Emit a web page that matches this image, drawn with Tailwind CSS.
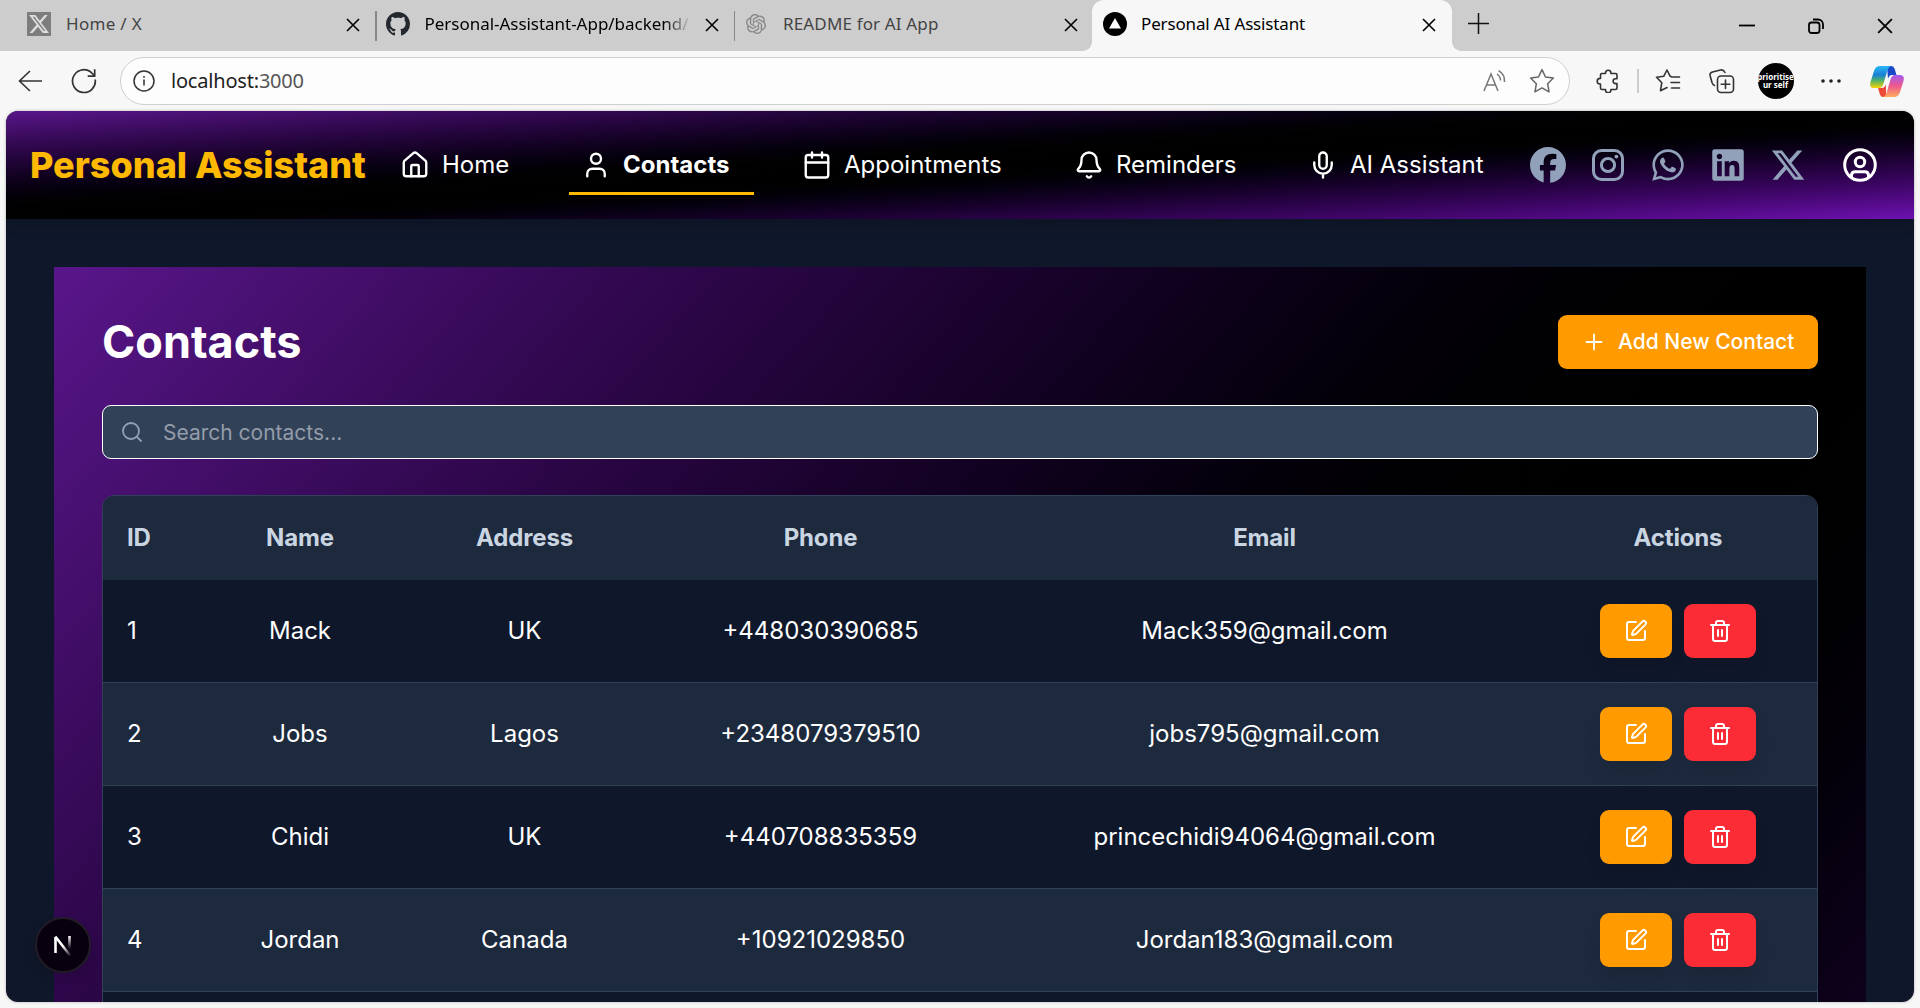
<!DOCTYPE html>
<html lang="en">
<head>
<meta charset="utf-8">
<title>Personal AI Assistant</title>
<script src="https://cdn.jsdelivr.net/npm/@tailwindcss/browser@4"></script>
</head>
<body class="w-[1920px] h-[1008px] overflow-hidden bg-[#f7f7f7] flex flex-col font-['Inter',sans-serif]">
<svg class="hidden">
  <symbol id="x" viewBox="0 0 24 24"><path fill="currentColor" d="M18.244 2.25h3.308l-7.227 8.26 8.502 11.24H16.17l-5.214-6.817L4.99 21.75H1.68l7.73-8.835L1.254 2.25H8.08l4.713 6.231zm-1.161 17.52h1.833L7.084 4.126H5.117z"/></symbol>
  <symbol id="xtwitter" viewBox="0 0 512 512"><path fill="currentColor" d="M389.2 48h70.6L305.6 224.2 487 464H345L233.7 318.6 106.5 464H35.8L200.7 275.5 26.8 48H172.4L272.9 180.9 389.2 48zM364.4 421.8h39.1L151.1 88h-42L364.4 421.8z"/></symbol>
  <symbol id="close" viewBox="0 0 14 14"><path d="M1 1l12 12M13 1L1 13" stroke="currentColor" stroke-width="1.6" fill="none"/></symbol>
  <symbol id="edit" viewBox="0 0 24 24"><path fill="none" stroke="currentColor" stroke-width="2" stroke-linecap="round" stroke-linejoin="round" d="M12 3H5a2 2 0 0 0-2 2v14a2 2 0 0 0 2 2h14a2 2 0 0 0 2-2v-7M18.375 2.625a1 1 0 0 1 3 3l-9.013 9.014a2 2 0 0 1-.853.505l-2.873.84a.5.5 0 0 1-.62-.62l.84-2.873a2 2 0 0 1 .506-.852z"/></symbol>
  <symbol id="trash" viewBox="0 0 24 24"><path fill="none" stroke="currentColor" stroke-width="2" stroke-linecap="round" stroke-linejoin="round" d="M3 6h18M19 6v14a2 2 0 0 1-2 2H7a2 2 0 0 1-2-2V6M8 6V4a2 2 0 0 1 2-2h4a2 2 0 0 1 2 2v2M10 11v6M14 11v6"/></symbol>
</svg>

<!-- Tab strip -->
<div class="h-[51px] shrink-0 bg-[#cdcdcd] flex font-['Noto_Sans',sans-serif] text-[17px] text-[#444]">
  <div class="w-[375px] flex items-center pl-[27px] pr-[15px] pb-[3px]">
    <div class="size-6 bg-[#7d7d7d] text-[#dedede] flex items-center justify-center"><svg class="size-[22px]"><use href="#x"/></svg></div>
    <span class="ml-[15px] flex-1 tracking-[0.3px]">Home / X</span>
    <svg class="size-[14px] text-black mt-[2px]"><use href="#close"/></svg>
  </div>
  <div class="w-[1.5px] h-[30px] mt-[11px] bg-[#888]"></div>
  <div class="w-[357px] flex items-center pl-[9px] pr-[15px] pb-[3px] text-black">
    <svg class="size-6" viewBox="0 0 16 16" fill="#24292f"><path d="M8 0C3.58 0 0 3.58 0 8c0 3.54 2.29 6.53 5.47 7.59.4.07.55-.17.55-.38 0-.19-.01-.82-.01-1.49-2.01.37-2.53-.49-2.69-.94-.09-.23-.48-.94-.82-1.13-.28-.15-.68-.52-.01-.53.63-.01 1.08.58 1.23.82.72 1.21 1.87.87 2.33.66.07-.52.28-.87.51-1.07-1.78-.2-3.64-.89-3.64-3.95 0-.87.31-1.59.82-2.15-.08-.2-.36-1.02.08-2.12 0 0 .67-.21 2.2.82.64-.18 1.32-.27 2-.27s1.36.09 2 .27c1.53-1.04 2.2-.82 2.2-.82.44 1.1.16 1.92.08 2.12.51.56.82 1.27.82 2.15 0 3.07-1.87 3.75-3.65 3.95.29.25.54.73.54 1.48 0 1.07-.01 1.93-.01 2.2 0 .21.15.46.55.38A8.01 8.01 0 0 0 16 8c0-4.42-3.58-8-8-8z"/></svg>
    <span class="ml-[15px] w-[266px] overflow-hidden whitespace-nowrap tracking-[-0.03px] bg-linear-to-r from-black from-90% to-transparent bg-clip-text text-transparent">Personal-Assistant-App/backend/</span>
    <svg class="ml-auto size-[14px] mt-[2px]"><use href="#close"/></svg>
  </div>
  <div class="w-[1.5px] h-[30px] mt-[11px] bg-[#888]"></div>
  <div class="w-[357px] flex items-center pl-[11px] pr-[14px] pb-[3px]">
    <svg class="size-5" viewBox="0 0 24 24" fill="#858585"><path d="M22.282 9.821a5.985 5.985 0 0 0-.516-4.91 6.046 6.046 0 0 0-6.51-2.9A6.065 6.065 0 0 0 4.981 4.18a5.985 5.985 0 0 0-3.998 2.9 6.046 6.046 0 0 0 .743 7.097 5.98 5.98 0 0 0 .51 4.911 6.051 6.051 0 0 0 6.515 2.9A5.985 5.985 0 0 0 13.26 24a6.056 6.056 0 0 0 5.772-4.206 5.99 5.99 0 0 0 3.997-2.9 6.056 6.056 0 0 0-.747-7.073zM13.26 22.43a4.476 4.476 0 0 1-2.876-1.04l.141-.081 4.779-2.758a.795.795 0 0 0 .392-.681v-6.737l2.02 1.168a.071.071 0 0 1 .038.052v5.583a4.504 4.504 0 0 1-4.494 4.494zM3.6 18.304a4.47 4.47 0 0 1-.535-3.014l.142.085 4.783 2.759a.771.771 0 0 0 .78 0l5.843-3.369v2.332a.08.08 0 0 1-.033.062L9.74 19.95a4.5 4.5 0 0 1-6.14-1.646zM2.34 7.896a4.485 4.485 0 0 1 2.366-1.973V11.6a.766.766 0 0 0 .388.676l5.815 3.355-2.02 1.168a.076.076 0 0 1-.071 0l-4.83-2.786A4.504 4.504 0 0 1 2.34 7.872zm16.597 3.855l-5.833-3.387L15.119 7.2a.076.076 0 0 1 .071 0l4.83 2.791a4.494 4.494 0 0 1-.676 8.105v-5.678a.79.79 0 0 0-.407-.667zm2.01-3.023l-.141-.085-4.774-2.782a.776.776 0 0 0-.785 0L9.409 9.23V6.897a.066.066 0 0 1 .028-.061l4.83-2.787a4.5 4.5 0 0 1 6.68 4.66zm-12.64 4.135l-2.02-1.164a.08.08 0 0 1-.038-.057V6.075a4.5 4.5 0 0 1 7.375-3.453l-.142.08L8.704 5.46a.795.795 0 0 0-.393.681zm1.097-2.365l2.602-1.5 2.607 1.5v2.999l-2.597 1.5-2.607-1.5z"/></svg>
    <span class="ml-[17px] flex-1 tracking-[0.15px]">README for AI App</span>
    <svg class="size-[14px] text-black mt-[2px]"><use href="#close"/></svg>
  </div>
  <div class="w-[360px] rounded-t-[12px] bg-[#f7f7f7] flex items-center pl-[11px] pr-[16px] pb-[3px] text-black relative">
    <div class="absolute -left-[9px] bottom-0 size-[9px] bg-[radial-gradient(circle_at_0_0,#cdcdcd_8.5px,#f7f7f7_9px)]"></div>
    <div class="absolute -right-[9px] bottom-0 size-[9px] bg-[radial-gradient(circle_at_100%_0,#cdcdcd_8.5px,#f7f7f7_9px)]"></div>
    <svg class="size-6" viewBox="0 0 24 24"><circle cx="12" cy="12" r="12"/><path d="M12 6l6 10.5H6z" fill="#fff"/></svg>
    <span class="ml-[14px] flex-1 tracking-[-0.15px]">Personal AI Assistant</span>
    <svg class="size-[14px] mt-[2px]"><use href="#close"/></svg>
  </div>
  <svg class="ml-[16px] mt-[13px] size-[21px]" viewBox="0 0 21 21" stroke="#111" stroke-width="1.5"><path d="M10.5 0v21M0 10.5h21"/></svg>
  <div class="ml-auto flex items-center gap-[53px] pr-[27px] text-black">
    <svg class="w-4 h-4" viewBox="0 0 16 16"><path d="M0 7.5h16" stroke="#000" stroke-width="1.8"/></svg>
    <svg class="size-4" viewBox="0 0 16 16" fill="none" stroke="#000" stroke-width="1.8"><rect x="1" y="4.5" width="10.5" height="10.5" rx="2.5"/><path d="M5 1.500h5a5 5 0 0 1 5 5V11"/></svg>
    <svg class="size-4"><use href="#close"/></svg>
  </div>
</div>

<!-- Toolbar -->
<div class="h-[60px] shrink-0 flex items-center font-['Noto_Sans',sans-serif] text-[#333]">
  <svg class="ml-[18px] w-6 h-6" viewBox="0 0 24 24" fill="none" stroke="#333" stroke-width="1.6"><path d="M24 12H1.500M12 2L1.500 12 12 22"/></svg>
  <svg class="ml-[29px] size-[26px]" viewBox="0 0 26 26" fill="none" stroke="#333" stroke-width="1.7" stroke-linejoin="round"><path d="M24.200 11.500A11.400 11.400 0 1 1 19.500 3.800L23.500 7.500M23.700 1.200v7h-7"/></svg>
  <div class="ml-[23px] w-[1450px] h-[48px] rounded-full border-[1.5px] border-[#d0d0d0] bg-[#fdfdfd] flex items-center pl-[12px] pr-[14px]">
    <svg class="size-[22px]" viewBox="0 0 22 22" fill="none" stroke="#333" stroke-width="1.5"><circle cx="11" cy="11" r="10"/><path d="M11 9.500v6M11 6v1.800"/></svg>
    <span class="ml-[16px] text-[20px] text-[#222] tracking-[-0.2px]">localhost:<span class="text-[#555]">3000</span></span>
    <svg class="ml-auto w-6 h-[22px]" viewBox="0 0 24 22" fill="none" stroke="#777" stroke-width="1.5"><path d="M2 21L9 4l7 17M5 15h8.500M15 4q3.500 2.500 3.500 6.500M16.500.7q6.500 3.500 6 11.300"/></svg>
    <svg class="ml-[23px] size-[26px]" viewBox="0 0 24 24" fill="none" stroke="#666" stroke-width="1.4" stroke-linejoin="round"><path d="M12 1.500l3.200 6.800 7.300 1-5.300 5.200 1.300 7.500L12 18.400 5.500 22l1.300-7.500L1.500 9.300l7.300-1z"/></svg>
  </div>
  <svg class="ml-[26px] size-6" viewBox="0 0 24 24" fill="none" stroke="#333" stroke-width="1.6" stroke-linejoin="round"><path d="M9.500 4.500V4a2.700 2.700 0 0 1 5.400 0v.5h4.600a1.500 1.500 0 0 1 1.500 1.500v3.800h-1.500a2.400 2.400 0 0 0 0 4.800H21V19a1.500 1.500 0 0 1-1.500 1.500h-4.600v.5a2.700 2.700 0 0 1-5.400 0v-.5H6A1.500 1.500 0 0 1 4.500 19v-4H4a2.800 2.800 0 0 1 0-5.600h.5V6A1.500 1.500 0 0 1 6 4.500z"/></svg>
  <div class="ml-[17px] w-[1.5px] h-6 bg-[#ccc]"></div>
  <svg class="ml-[16px] size-[26px]" viewBox="0 0 26 26" fill="none" stroke="#333" stroke-width="1.6" stroke-linejoin="round" stroke-linecap="round"><path d="M16 8.500l-.8-.2L12 2 8.700 8.300 1.500 9.300l5.300 5.400-1.300 8L12 19.500M16.500 9h8M16 14.500h8.500M16.500 20h8"/></svg>
  <svg class="ml-[28px] size-[26px]" viewBox="0 0 26 26" fill="none" stroke="#333" stroke-width="1.6" stroke-linecap="round"><rect x="8.5" y="8" width="16" height="16.5" rx="3.5"/><path d="M16.500 12v8.500M12.200 16.300h8.600M5.500 17.500c-1.500-.5-2-1.500-2.500-3L1.200 8c-.5-2 .3-3.500 2.300-4l8-2c2-.5 3.500.5 4.500 2.500"/></svg>
  <div class="ml-[23px] size-9 rounded-full bg-black text-white text-[8px] leading-[8px] font-bold flex flex-col items-center justify-center overflow-hidden"><span>prioritise</span><span>ur self</span></div>
  <svg class="ml-[27px] w-5 h-4" viewBox="0 0 20 16" fill="#222"><circle cx="2" cy="8" r="1.8"/><circle cx="10" cy="8" r="1.8"/><circle cx="18" cy="8" r="1.8"/></svg>
  <svg class="ml-[29px] w-[34px] h-[31px] shrink-0" viewBox="0 0 34 31"><defs><linearGradient id="c1" x1="0" y1="0" x2="0" y2="1"><stop offset="0" stop-color="#28b8f5"/><stop offset=".4" stop-color="#1a80d8"/><stop offset=".65" stop-color="#4cb06a"/><stop offset="1" stop-color="#f8d400"/></linearGradient><linearGradient id="c2" x1="0" y1="0" x2="0" y2="1"><stop offset="0" stop-color="#a35af0"/><stop offset=".5" stop-color="#ee5a8c"/><stop offset="1" stop-color="#ffab5e"/></linearGradient></defs><path d="M17 0h4q3 0 4 4l1.500 5H22q-3 0-4 4z" fill="#1a48c8"/><path d="M16 31h-3q-2.500 0-3.500-4L8 22h4q3 0 4-4z" fill="#ee4838"/><path d="M10 0h11q-2.500 1-3.500 4l-4 13.500q-1.300 4.500-4.500 4.500H4q-5 0-3.500-6L4 5q1.500-5 6-5z" fill="url(#c1)"/><path d="M24 31H13q2.500-1 3.500-4l4-13.500Q21.800 9 25 9h5q5 0 3.500 6L30 26q-1.500 5-6 5z" fill="url(#c2)"/></svg>
</div>

<!-- Page -->
<div class="mx-[6px] h-[891px] shrink-0 rounded-[12px] overflow-hidden bg-[#0f172a] flex flex-col relative text-white shadow-[0_0_3px_rgba(0,0,0,0.3)]">
  <nav class="h-[108px] shrink-0 bg-linear-to-br from-purple-900 via-black to-purple-800 flex items-center pl-6 shadow-[0_6px_12px_rgba(0,0,0,0.15)] text-[24px]">
    <div class="w-[358px] shrink-0 text-[36px] font-extrabold text-[#ffb900] whitespace-nowrap">Personal Assistant</div>
    <div class="flex gap-9 shrink-0 whitespace-nowrap">
      <a class="h-[60px] flex items-center gap-3 pl-3 pr-6 w-[145px]"><svg class="size-[30px] shrink-0" viewBox="0 0 24 24" fill="none" stroke="currentColor" stroke-width="1.9" stroke-linecap="round" stroke-linejoin="round"><path d="M15 21v-8a1 1 0 0 0-1-1h-4a1 1 0 0 0-1 1v8"/><path d="M3 10a2 2 0 0 1 .709-1.528l7-5.999a2 2 0 0 1 2.582 0l7 5.999A2 2 0 0 1 21 10v9a2 2 0 0 1-2 2H5a2 2 0 0 1-2-2z"/></svg>Home</a>
      <a class="h-[60px] flex items-center gap-3 pl-3 pr-6 w-[185px] relative font-bold"><svg class="size-[30px] shrink-0" viewBox="0 0 24 24" fill="none" stroke="currentColor" stroke-width="1.9" stroke-linecap="round" stroke-linejoin="round"><path d="M19 21v-2a4 4 0 0 0-4-4H9a4 4 0 0 0-4 4v2"/><circle cx="12" cy="7" r="4"/></svg>Contacts<span class="absolute inset-x-0 bottom-0 h-[3px] bg-[#ffb900]"></span></a>
      <a class="h-[60px] flex items-center gap-3 pl-3 pr-6 w-[236px]"><svg class="size-[30px] shrink-0" viewBox="0 0 24 24" fill="none" stroke="currentColor" stroke-width="1.9" stroke-linecap="round" stroke-linejoin="round"><path d="M8 2v4M16 2v4M3 10h18"/><rect x="3" y="4" width="18" height="18" rx="2"/></svg>Appointments</a>
      <a class="h-[60px] flex items-center gap-3 pl-3 pr-6 w-[198px]"><svg class="size-[30px] shrink-0" viewBox="0 0 24 24" fill="none" stroke="currentColor" stroke-width="1.9" stroke-linecap="round" stroke-linejoin="round"><path d="M10.268 21a2 2 0 0 0 3.464 0"/><path d="M3.262 15.326A1 1 0 0 0 4 17h16a1 1 0 0 0 .74-1.673C19.410 13.956 18 12.499 18 8A6 6 0 0 0 6 8c0 4.499-1.411 5.956-2.738 7.326"/></svg>Reminders</a>
      <a class="h-[60px] flex items-center gap-3 pl-3 pr-6 w-[211px]"><svg class="size-[30px] shrink-0" viewBox="0 0 24 24" fill="none" stroke="currentColor" stroke-width="1.9" stroke-linecap="round" stroke-linejoin="round"><path d="M12 19v3M19 10v2a7 7 0 0 1-14 0v-2"/><rect x="9" y="2" width="6" height="13" rx="3"/></svg>AI Assistant</a>
    </div>
    <div class="flex gap-6 ml-auto text-slate-400 shrink-0">
      <svg class="size-9" viewBox="0 0 512 512" fill="currentColor"><path d="M512 256C512 114.600 397.400 0 256 0S0 114.600 0 256C0 376 82.700 476.800 194.200 504.500V334.200H141.400V256h52.800V222.300c0-87.100 39.400-127.500 125-127.500 16.200 0 44.200 3.200 55.700 6.400V172c-6-.6-16.500-1-29.600-1-42 0-58.200 15.900-58.200 57.200V256h83.600l-14.400 78.200H287V510.100C413.800 494.800 512 386.900 512 256z"/></svg>
      <svg class="size-9" viewBox="0 0 36 36" fill="none" stroke="currentColor" stroke-width="3"><rect x="3.5" y="3.5" width="29" height="29" rx="8"/><circle cx="18" cy="18" r="6.6"/><circle cx="26.4" cy="9.6" r="1.9" fill="currentColor" stroke="none"/></svg>
      <svg class="size-9" viewBox="-32 0 512 512" fill="currentColor"><path d="M380.900 97.100C339 55.100 283.200 32 223.900 32c-122.400 0-222 99.600-222 222 0 39.100 10.200 77.300 29.600 111L0 480l117.700-30.900c32.400 17.700 68.900 27 106.100 27h.1c122.300 0 224.100-99.600 224.100-222 0-59.300-25.200-115-67.100-157zm-157 341.600c-33.200 0-65.700-8.900-94-25.700l-6.700-4-69.800 18.300L72 359.200l-4.400-7c-18.500-29.400-28.200-63.300-28.200-98.200 0-101.700 82.800-184.500 184.600-184.500 49.300 0 95.600 19.200 130.400 54.100 34.800 34.900 56.200 81.200 56.100 130.500 0 101.800-84.900 184.600-186.600 184.600zm101.200-138.200c-5.500-2.800-32.800-16.200-37.900-18-5.100-1.900-8.800-2.800-12.500 2.800-3.700 5.600-14.300 18-17.600 21.800-3.200 3.700-6.500 4.200-12 1.400-32.600-16.300-54-29.100-75.500-66-5.700-9.800 5.700-9.100 16.300-30.300 1.800-3.700.9-6.900-.5-9.700-1.400-2.800-12.500-30.100-17.100-41.200-4.500-10.800-9.100-9.300-12.500-9.500-3.200-.2-6.900-.2-10.600-.2-3.700 0-9.700 1.400-14.800 6.900-5.100 5.600-19.400 19-19.400 46.300 0 27.300 19.900 53.700 22.600 57.400 2.800 3.700 39.100 59.700 94.800 83.800 35.200 15.200 49 16.500 66.600 13.900 10.700-1.600 32.800-13.400 37.400-26.400 4.600-13 4.600-24.100 3.200-26.400-1.300-2.500-5-3.900-10.500-6.600z"/></svg>
      <svg class="size-9" viewBox="-32 0 512 512" fill="currentColor"><path d="M416 32H31.900C14.300 32 0 46.500 0 64.300v383.400C0 465.500 14.300 480 31.900 480H416c17.600 0 32-14.500 32-32.300V64.300c0-17.800-14.400-32.300-32-32.300zM135.400 416H69V202.200h66.500V416zm-33.200-243c-21.300 0-38.500-17.300-38.500-38.500S80.900 96 102.200 96c21.200 0 38.500 17.300 38.500 38.500 0 21.300-17.200 38.500-38.500 38.500zm282.100 243h-66.400V312c0-24.800-.5-56.700-34.500-56.700-34.600 0-39.900 27-39.900 54.900V416h-66.400V202.200h63.700v29.200h.9c8.900-16.800 30.600-34.500 62.900-34.500 67.200 0 79.700 44.300 79.700 101.900V416z"/></svg>
      <svg class="size-9"><use href="#xtwitter"/></svg>
    </div>
    <svg class="size-9 ml-9 mr-9 shrink-0" viewBox="0 0 36 36" fill="none" stroke="currentColor" stroke-width="3"><circle cx="18" cy="18" r="15.3"/><circle cx="18" cy="15" r="4.7"/><path d="M9.500 30v-1.500q0-3.700 3.700-3.700h9.600q3.700 0 3.700 3.700V30"/></svg>
  </nav>

  <main class="flex-1 min-h-0 p-12 pb-0">
    <div class="h-[2040px] bg-linear-to-br from-purple-900 via-black to-purple-900 p-12">
      <div class="flex items-center justify-between h-[54px]">
        <h1 class="text-[45px] leading-[54px] font-bold">Contacts</h1>
        <button class="h-[54px] w-[260px] rounded-[9px] bg-[#ff9a00] flex items-center gap-3 pl-6 text-[21px] font-medium whitespace-nowrap"><svg class="size-6 shrink-0" viewBox="0 0 24 24" stroke="currentColor" stroke-width="1.8" stroke-linecap="round"><path d="M4.500 12h15M12 4.500v15"/></svg>Add New Contact</button>
      </div>
      <div class="mt-9 h-[54px] rounded-[9px] border border-white bg-slate-700 flex items-center pl-[17px] text-[21px] text-[#939ca8]">
        <svg class="size-6 mr-[19px] text-slate-400" viewBox="0 0 24 24" fill="none" stroke="currentColor" stroke-width="1.8" stroke-linecap="round"><circle cx="11" cy="11" r="8"/><path d="M21 21l-4.300-4.300"/></svg><span class="pt-[2px]">Search contacts...</span>
      </div>
      <div class="mt-9 rounded-t-[12px] border border-slate-700 overflow-hidden text-[24px]">
        <div class="h-[84px] bg-slate-800 text-slate-300 font-bold tracking-[-0.15px] grid grid-cols-[99px_196px_253px_339px_549px_278px] items-center text-center">
          <div class="text-left pl-6">ID</div><div>Name</div><div>Address</div><div>Phone</div><div>Email</div><div>Actions</div>
        </div>
        <div id="rows"></div>
      </div>
    </div>
  </main>

  <div class="absolute left-[29px] top-[806px] size-[56px] rounded-full bg-[#08000f] border-[2.5px] border-[#211c26] flex items-center justify-center shadow-[0_6px_12px_rgba(0,0,0,0.15)]">
    <svg class="w-[20px] h-[24px]" viewBox="0 0 20 24" fill="none" stroke-width="2.6"><defs><linearGradient id="n1" gradientUnits="userSpaceOnUse" x1="10" y1="13" x2="18" y2="23"><stop stop-color="#fff"/><stop offset="1" stop-color="#fff" stop-opacity="0"/></linearGradient><linearGradient id="n2" gradientUnits="userSpaceOnUse" x1="0" y1="3" x2="0" y2="16"><stop stop-color="#fff"/><stop offset="1" stop-color="#fff" stop-opacity="0"/></linearGradient></defs><path d="M2.500 20V4" stroke="#fff"/><path d="M2.300 3.500L17.500 23" stroke="url(#n1)"/><path d="M16.500 3v13" stroke="url(#n2)"/></svg>
  </div>
</div>
<script>
const contacts = [
  [1, 'Mack', 'UK', '+448030390685', 'Mack359@gmail.com'],
  [2, 'Jobs', 'Lagos', '+2348079379510', 'jobs795@gmail.com'],
  [3, 'Chidi', 'UK', '+440708835359', 'princechidi94064@gmail.com'],
  [4, 'Jordan', 'Canada', '+10921029850', 'Jordan183@gmail.com'],
  ['', '', '', '', '']
];
document.getElementById('rows').innerHTML = contacts.map((c, i) => `
  <div class="h-[103px] border-b border-slate-700 ${i % 2 ? 'bg-slate-800' : 'bg-slate-900'} grid grid-cols-[99px_196px_253px_339px_549px_278px] items-center text-center">
    <div class="text-left pl-6">${c[0]}</div><div>${c[1]}</div><div>${c[2]}</div><div>${c[3]}</div><div>${c[4]}</div>
    <div class="flex justify-center gap-3">
      <button class="w-[72px] h-[54px] rounded-[9px] bg-[#ff9a00] flex items-center justify-center shadow-[0_12px_18px_-3px_rgba(0,0,0,0.1)]"><svg class="size-6"><use href="#edit"/></svg></button>
      <button class="w-[72px] h-[54px] rounded-[9px] bg-[#fb2c36] flex items-center justify-center shadow-[0_12px_18px_-3px_rgba(0,0,0,0.1)]"><svg class="size-6"><use href="#trash"/></svg></button>
    </div>
  </div>`).join('');
</script>
</body>
</html>
